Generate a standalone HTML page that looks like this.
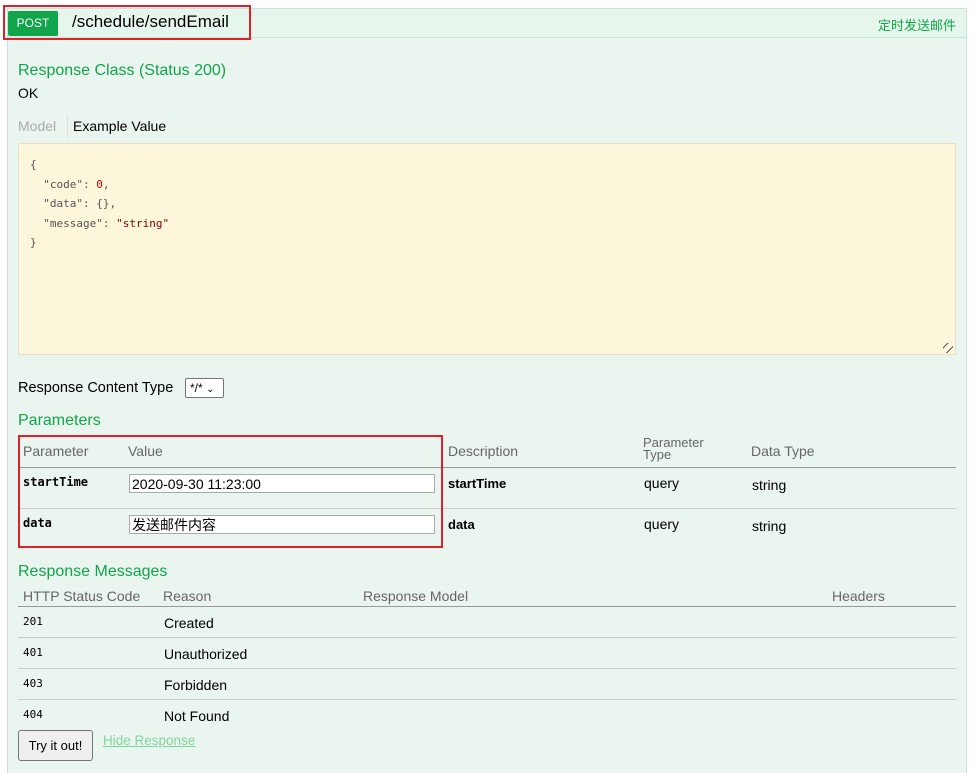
<!DOCTYPE html>
<html><head><meta charset="utf-8"><style>
*{margin:0;padding:0;box-sizing:border-box}
html,body{width:976px;height:773px;overflow:hidden}
body{background:#fff;font-family:"Liberation Sans","Noto Sans CJK SC",sans-serif;position:relative;color:#000}
.a{position:absolute;white-space:nowrap}
.box{position:absolute;left:7px;top:8px;width:960px;height:770px;background:#ebf5f0;border:1px solid #c3e8d1}
.hdr{position:absolute;left:8px;top:9px;width:958px;height:29px;background:#e7f6ec;border-bottom:1px solid #c3e8d1}
.g{color:#10a54a}
.mono{font-family:"DejaVu Sans Mono","Liberation Mono",monospace}
.line{position:absolute;height:1px}
.th{color:#666;font-size:14px}
input{position:absolute;height:19px;border:1px solid #aaa;background:#fff;font-size:14px;padding-left:2px;font-family:"Liberation Sans","Noto Sans CJK SC",sans-serif}
</style></head><body>
<div class="box"></div>
<div class="hdr"></div>
<div class="a" style="left:8px;top:11px;width:50px;height:25px;background:#10a54a;border-radius:2px;color:#fff;font-size:12px;line-height:25px;text-align:center">POST</div>
<div class="a" style="left:72px;top:12px;font-size:17px">/schedule/sendEmail</div>
<div class="a" style="left:3px;top:5px;width:248px;height:35px;border:2px solid #e0202a"></div>
<div class="a g" style="left:878px;top:15px;font-size:13px">定时发送邮件</div>

<div class="a g" style="left:18px;top:62px;font-size:16px">Response Class (Status 200)</div>
<div class="a" style="left:18px;top:85px;font-size:14px">OK</div>
<div class="a" style="left:18px;top:118px;font-size:14px;color:#aaa">Model</div>
<div class="a" style="left:67px;top:116px;width:1px;height:22px;background:#ddd"></div>
<div class="a" style="left:73px;top:118px;font-size:14px">Example Value</div>

<div class="a" style="left:18px;top:143px;width:938px;height:212px;background:#fcf6db;border:1px solid #e5e0c6"></div>
<div class="a mono" style="left:30px;top:155px;font-size:11px;line-height:19.5px;color:#555;white-space:pre">{
  "code": <span style="color:#c00">0</span>,
  "data": {},
  "message": <span style="color:#800">"string"</span>
}</div>
<div class="a" style="left:943px;top:343px;width:10px;height:10px;background:repeating-linear-gradient(135deg,transparent 0 3px,#555 3px 4px,transparent 4px 6px)"></div>

<div class="a" style="left:18px;top:380px;font-size:14.5px">Response Content Type</div>
<div class="a" style="left:185px;top:378px;width:39px;height:20px;border:1px solid #767676;background:#fff;border-radius:2px;font-size:12px;line-height:18px;padding-left:4px">*/* <span style="font-size:10px">⌄</span></div>

<div class="a g" style="left:18px;top:412px;font-size:16px">Parameters</div>
<div class="a th" style="left:23px;top:443px">Parameter</div>
<div class="a th" style="left:128px;top:443px">Value</div>
<div class="a th" style="left:448px;top:443px">Description</div>
<div class="a th" style="left:643px;top:437px;font-size:13px;line-height:12px">Parameter<br>Type</div>
<div class="a th" style="left:751px;top:443px">Data Type</div>
<div class="line" style="left:18px;top:467px;width:938px;background:#999"></div>
<div class="a mono" style="left:23px;top:475px;font-size:12px;font-weight:bold">startTime</div>
<input style="left:129px;top:474px;width:306px" value="2020-09-30 11:23:00">
<div class="a" style="left:448px;top:476px;font-size:13px;font-weight:bold">startTime</div>
<div class="a" style="left:644px;top:475px;font-size:14px">query</div>
<div class="a" style="left:752px;top:477px;font-size:14px">string</div>
<div class="line" style="left:18px;top:508px;width:938px;background:#ccc"></div>
<div class="a mono" style="left:23px;top:516px;font-size:12px;font-weight:bold">data</div>
<input style="left:129px;top:515px;width:306px" value="发送邮件内容">
<div class="a" style="left:448px;top:517px;font-size:13px;font-weight:bold">data</div>
<div class="a" style="left:644px;top:516px;font-size:14px">query</div>
<div class="a" style="left:752px;top:518px;font-size:14px">string</div>
<div class="a" style="left:18px;top:435px;width:425px;height:113px;border:2px solid #e0202a"></div>

<div class="a g" style="left:18px;top:563px;font-size:16px">Response Messages</div>
<div class="a th" style="left:23px;top:588px">HTTP Status Code</div>
<div class="a th" style="left:163px;top:588px">Reason</div>
<div class="a th" style="left:363px;top:588px">Response Model</div>
<div class="a th" style="left:832px;top:588px">Headers</div>
<div class="line" style="left:18px;top:606px;width:938px;background:#999"></div>
<div class="a mono" style="left:23px;top:615px;font-size:11px">201</div><div class="a" style="left:164px;top:615px;font-size:14px">Created</div>
<div class="line" style="left:18px;top:637px;width:938px;background:#ccc"></div>
<div class="a mono" style="left:23px;top:646px;font-size:11px">401</div><div class="a" style="left:164px;top:646px;font-size:14px">Unauthorized</div>
<div class="line" style="left:18px;top:668px;width:938px;background:#ccc"></div>
<div class="a mono" style="left:23px;top:677px;font-size:11px">403</div><div class="a" style="left:164px;top:677px;font-size:14px">Forbidden</div>
<div class="line" style="left:18px;top:699px;width:938px;background:#ccc"></div>
<div class="a mono" style="left:23px;top:708px;font-size:11px">404</div><div class="a" style="left:164px;top:708px;font-size:14px">Not Found</div>
<div class="a" style="left:18px;top:730px;width:75px;height:31px;border:1px solid #767676;border-radius:3px;background:#efefef;font-size:13px;line-height:29px;text-align:center">Try it out!</div>
<div class="a" style="left:103px;top:733px;font-size:13.5px;color:#7fd69c;text-decoration:underline">Hide Response</div>
</body></html>
